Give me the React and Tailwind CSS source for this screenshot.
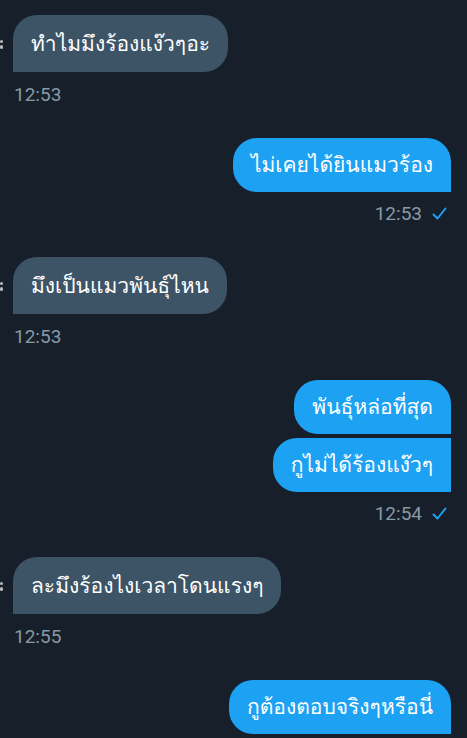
import React from 'react';

const thai = { fontFamily: 'Loma, "Noto Sans Thai Looped", "Noto Sans Thai", "Noto Sans", Roboto, sans-serif' };

function Check() {
  return (
    <svg width="15" height="14" viewBox="0 0 15 14" className="shrink-0">
      <path d="M1.5 7.5 L5.5 11.5 L13.5 1.5" fill="none" stroke="#1da1f2" strokeWidth="2" strokeLinecap="round" strokeLinejoin="round" />
    </svg>
  );
}

function Received({ text, time }) {
  return (
    <div className="flex flex-col items-start">
      <div className="flex items-center">
        {/* clipped avatar edge */}
        <span className="w-[4px] flex flex-col gap-[2px] pt-[2px]">
          <span className="w-[3px] h-[3px] bg-white/70 rounded-sm" />
          <span className="w-[3px] h-[4px] bg-white/70 rounded-sm" />
        </span>
        <div
          className="ml-[9px] h-[57px] flex items-center px-[18px] bg-[#3d5466] text-white text-[21px] rounded-3xl rounded-bl-none whitespace-nowrap"
          style={thai}
        >
          {text}
        </div>
      </div>
      <div className="mt-[13px] ml-[14px] h-5 leading-5 text-[19px] text-[#8899a6] font-['Roboto',sans-serif]">
        {time}
      </div>
    </div>
  );
}

function Sent({ texts, time }) {
  return (
    <div className="flex flex-col items-end gap-1">
      {texts.map((t, i) => (
        <div
          key={i}
          className={`h-[54px] flex items-center px-[18px] bg-[#1da1f2] text-white text-[21px] rounded-3xl rounded-br-none whitespace-nowrap ${i > 0 ? 'rounded-tr-none' : ''}`}
          style={thai}
        >
          {t}
        </div>
      ))}
      {time && (
        <div className="mt-2 flex items-center gap-[10px] pr-[4px] h-5 leading-5 text-[19px] text-[#8899a6] font-['Roboto',sans-serif]">
          <span>{time}</span>
          <Check />
        </div>
      )}
    </div>
  );
}

export default function App() {
  return (
    <div className="w-[467px] h-[738px] overflow-hidden bg-[#17202a] pt-[15px] pr-4 flex flex-col gap-[33px]">
      <Received text="ทำไมมึงร้องแง๊วๆอะ" time="12:53" />
      <Sent texts={['ไม่เคยได้ยินแมวร้อง']} time="12:53" />
      <Received text="มึงเป็นแมวพันธุ์ไหน" time="12:53" />
      <Sent texts={['พันธุ์หล่อที่สุด', 'กูไม่ได้ร้องแง๊วๆ']} time="12:54" />
      <Received text="ละมึงร้องไงเวลาโดนแรงๆ" time="12:55" />
      <Sent texts={['กูต้องตอบจริงๆหรือนี่']} />
    </div>
  );
}
